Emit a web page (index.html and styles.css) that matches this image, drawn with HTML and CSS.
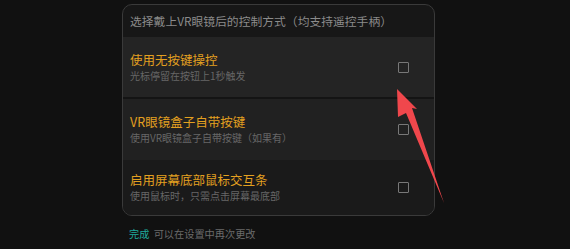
FILE: index.html
```html
<!DOCTYPE html>
<html lang="zh-CN">
<head>
    <meta charset="UTF-8">
    <meta name="viewport" content="width=device-width, initial-scale=1.0">
    <title>控制方式</title>
    <link rel="stylesheet" href="styles.css">
</head>
<body>

<div class="page">
    <div class="card">
        <div class="card-head">选择戴上VR眼镜后的控制方式（均支持遥控手柄）</div>

        <div class="option option-first">
            <div class="option-text">
                <p class="option-title">使用无按键操控</p>
                <p class="option-sub">光标停留在按钮上1秒触发</p>
            </div>
            <span class="check"></span>
        </div>

        <div class="option option-second">
            <div class="option-text">
                <p class="option-title">VR眼镜盒子自带按键</p>
                <p class="option-sub">使用VR眼镜盒子自带按键（如果有）</p>
            </div>
            <span class="check"></span>
        </div>

        <div class="option option-third">
            <div class="option-text">
                <p class="option-title">启用屏幕底部鼠标交互条</p>
                <p class="option-sub">使用鼠标时，只需点击屏幕最底部</p>
            </div>
            <span class="check"></span>
        </div>
    </div>

    <p class="footer"><span class="done">完成</span> 可以在设置中再次更改</p>
</div>

<!-- 标注箭头 -->
<svg class="arrow" width="570" height="249" viewBox="0 0 570 249">
    <polygon points="397,89 417,109 412,108 444,203 406,113 398,117" fill="#f0474c"/>
</svg>

</body>
</html>
```

FILE: styles.css
```css
/* Página */
body {
    margin: 0;
    padding: 0;
    background-color: #111111;
    font-family: "Noto Sans CJK SC", "Noto Sans", sans-serif;
}

.page {
    padding: 4px 0 0 122px;
}

/* Cartão */
.card {
    width: 311px;
    border: 1px solid #3a3a3a;
    border-radius: 10px;
    overflow: hidden;
    background-color: #171717;
}

.card-head {
    height: 32px;
    line-height: 31px;
    padding-left: 7px;
    font-size: 11.8px;
    color: #8b8b8b;
}

.option {
    display: flex;
    align-items: center;
    justify-content: space-between;
    padding: 0 25px 0 7px;
}

.option-first {
    height: 60px;
    background-color: #242424;
    border-bottom: 2px solid #141414;
}

.option-second {
    height: 61px;
    background-color: #212121;
}

.option-third {
    height: 55px;
    background-color: #1a1a1a;
}

.option-text p {
    margin: 0;
}

.option-title {
    font-size: 12.5px;
    line-height: 17px;
    color: #e3a020;
}

.option-sub {
    font-size: 10px;
    line-height: 16px;
    color: #676767;
}

.check {
    width: 9px;
    height: 9px;
    border: 1px solid #787878;
    border-radius: 1px;
}

/* Rodapé */
.footer {
    margin: 10px 0 0 7px;
    font-size: 10.2px;
    color: #6a6a6a;
}

.done {
    color: #1fa99d;
    margin-right: 2px;
}

/* Seta */
.arrow {
    position: absolute;
    left: 0;
    top: 0;
}
```
